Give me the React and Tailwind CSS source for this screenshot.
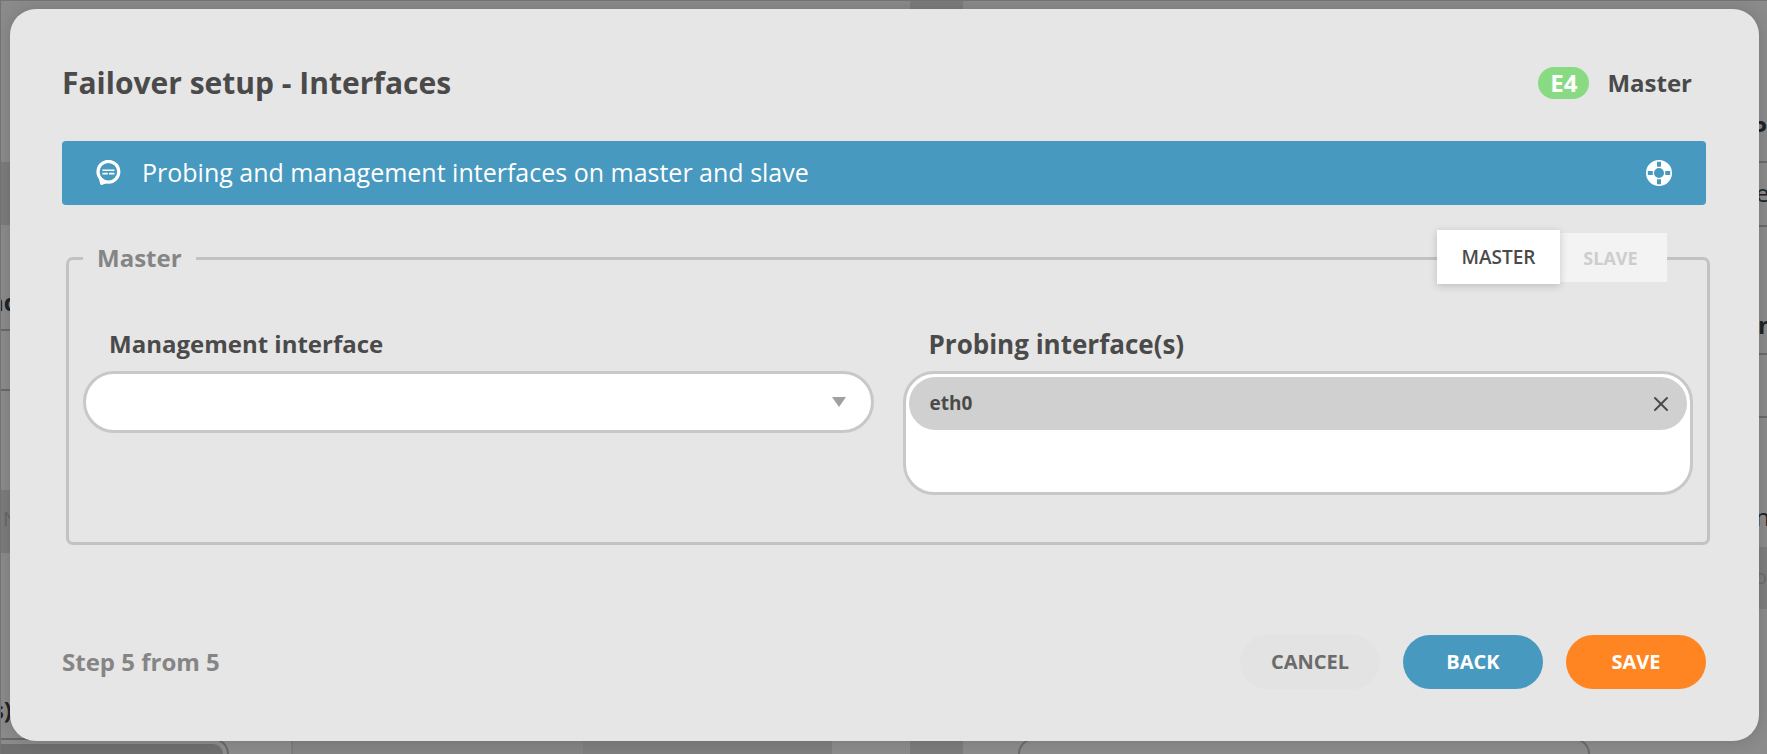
import { X } from "lucide-react";

const ChatIcon = () => (
    <svg viewBox="0 0 26 26" className="h-[26px] w-[26px] shrink-0" fill="none" aria-hidden="true">
        <circle cx="12.4" cy="11.8" r="10.4" stroke="white" strokeWidth="3.2" />
        <path d="M2.8 17.5L4 23.6Q4.4 25.6 6.4 24.8L12.4 22.4L6 18Z" fill="white" />
        <path d="M6.4 10.2h12M6.4 13.6h5.4M13 13.6h5.4" stroke="white" strokeWidth="1.6" />
    </svg>
);

const HelpIcon = () => (
    <svg viewBox="0 0 26 26" className="h-[26px] w-[26px]" aria-hidden="true">
        <circle cx="13" cy="13" r="9" fill="none" stroke="white" strokeWidth="8" />
        <path d="M13 1.8v5M13 19.2v5M1.8 13h5M19.2 13h5" stroke="#4799bf" strokeWidth="4" />
    </svg>
);

const ArrowIcon = () => (
    <svg viewBox="0 0 14 10" className="pointer-events-none absolute top-[26px] right-[28px] h-[10px] w-[14px]" aria-hidden="true">
        <path d="M0 0h14L7 10Z" fill="#a0a0a0" />
    </svg>
);

// the page that lies behind the dialog, only its edges are seen
const Backdrop = () => (
    <div aria-hidden="true" className="absolute inset-0 grid grid-cols-[910fr_53fr_804fr] overflow-hidden border-t border-l border-[#747474] text-[24px] leading-[32px] font-bold text-[#1f2326]">
        <div>
            <div className="w-[18px]">
                <div className="h-[161px]" />
                <div className="h-[63px] bg-[#7c7c7c]" />
                <div className="flex h-[106px] items-end justify-end border-b-2 border-[#6a6a6a] pb-[11px]">nd</div>
                <div className="h-[60px] border-b-2 border-[#6a6a6a]" />
                <div className="h-[99px]" />
                <div className="h-[63px] bg-[#7c7c7c] pt-[13px] pl-[2px] text-[20px] font-normal text-[#686868]">N</div>
            </div>
            <div className="absolute bottom-[28px] flex w-[11px] justify-end">s)</div>
            <div className="absolute bottom-0 flex h-[16px] w-[910px]">
                <div className="w-[228px] rounded-tr-[28px] border-t-2 border-r-2 border-[#686868] pt-1 pr-1">
                    <div className="h-full rounded-tr-[24px] bg-[#6f6f6f]" />
                </div>
                <div className="ml-[62px] w-[292px] border-l-2 border-[#7c7c7c] bg-[#848484]" />
                <div className="w-[249px] bg-[#7e7e7e]" />
            </div>
        </div>
        <div className="bg-[#7c7c7c]" />
        <div className="flex flex-col">
            <div className="w-[9px] self-end">
                <div className="flex h-[162px] items-end justify-end border-b-2 border-[#6a6a6a] pb-[16px]">P</div>
                <div className="flex h-[64px] items-end justify-center border-b-2 border-[#6a6a6a] pb-[16px] font-normal">e</div>
                <div className="flex h-[128px] items-end border-b-2 border-[#6a6a6a] pb-[12px]">n</div>
                <div className="h-[63px] border-b-2 border-[#6a6a6a]" />
                <div className="flex h-[129px] items-end justify-center pb-[14px] font-normal">n</div>
                <div className="flex h-[62px] justify-end bg-[#7e7e7e] pt-[14px] text-[20px] font-normal text-[#6c6c6c]">o</div>
            </div>
            <div className="absolute bottom-0 ml-[55px] h-[16px] w-[572px] rounded-t-[28px] border-2 border-b-0 border-[#6a6a6a]" />
        </div>
    </div>
);

const Field = ({ id, label, labelClass, children }) => (
    <div>
        <label htmlFor={id} className={`mb-[11px] block pl-[26px] leading-[32px] font-bold ${labelClass}`}>{label}</label>
        {children}
    </div>
);

const buttonBase = "h-[54px] w-[140px] rounded-full text-[20px] font-bold";

export default function App() {
    return (
        <div className="relative min-h-screen overflow-hidden bg-[#8b8b8b] pt-[9px] pr-[8px] pb-[13px] pl-[10px] font-['Open_Sans',sans-serif] text-[#4a4a4a]">
            <Backdrop />
            <main role="dialog" aria-labelledby="title" className="relative rounded-[26px] bg-[#e6e6e6] pt-[52px] pr-[53px] pb-[52px] pl-[52px] shadow-[0_0_16px_rgba(0,0,0,0.15)]">
                <header className="flex items-center justify-between pr-[14px]">
                    <h1 id="title" className="text-[30px] leading-[44px] font-bold">Failover setup - Interfaces</h1>
                    <div className="flex items-center gap-[18px] text-[24px] leading-[32px] font-bold">
                        <span className="rounded-full bg-[#89db83] px-[12px] text-white">E4</span>
                        <span>Master</span>
                    </div>
                </header>

                <div className="mt-[36px] flex h-[64px] items-center rounded-[4px] bg-[#4799bf] px-[34px] text-[25px] text-white">
                    <ChatIcon />
                    <p className="ml-[20px] flex-1">Probing and management interfaces on master and slave</p>
                    <button type="button" aria-label="Help"><HelpIcon /></button>
                </div>

                <div className="relative mt-[37px] -mr-[4px] ml-[4px]">
                    <fieldset className="rounded-[7px] border-3 border-[#c2c2c2] px-[14px] pb-[47px]">
                        <legend className="px-[14px] text-[24px] leading-[32px] font-bold text-[#858585]">Master</legend>
                        <div className="grid grid-cols-2 gap-[29px] pt-[54px]">
                            <Field id="management" label="Management interface" labelClass="text-[24px]">
                                <div className="relative">
                                    <select id="management" className="h-[62px] w-full appearance-none rounded-full border-3 border-[#c8c8c8] bg-white px-[24px] text-[20px]">
                                        <option value=""></option>
                                    </select>
                                    <ArrowIcon />
                                </div>
                            </Field>
                            <Field id="probing" label="Probing interface(s)" labelClass="text-[26px]">
                                <div className="h-[124px] rounded-[31px] border-3 border-[#c8c8c8] bg-white p-[3px]">
                                    <div className="flex h-[53px] items-center justify-between rounded-full bg-[#d0d0d0] pr-[14px] pl-[21px] text-[19px] font-bold">
                                        <span>eth0</span>
                                        <button id="probing" type="button" aria-label="Remove eth0">
                                            <X className="h-[24px] w-[24px]" strokeWidth={2} />
                                        </button>
                                    </div>
                                </div>
                            </Field>
                        </div>
                    </fieldset>
                    <div className="absolute -top-[12px] right-[43px] flex items-center">
                        <button type="button" className="relative h-[54px] w-[123px] bg-white text-[19px] font-semibold shadow-[0_2px_8px_rgba(0,0,0,0.18)]">MASTER</button>
                        <button type="button" className="h-[49px] w-[107px] bg-[#f3f3f3] pt-[2px] pr-[6px] text-[18px] font-bold text-[#cdcdcd]">SLAVE</button>
                    </div>
                </div>

                <footer className="mt-[90px] flex items-center justify-between">
                    <p className="text-[24px] leading-[32px] font-bold text-[#858585]">Step 5 from 5</p>
                    <div className="flex gap-[23px]">
                        <button type="button" className={`${buttonBase} bg-[#e3e3e3] text-[#6b6b6b]`}>CANCEL</button>
                        <button type="button" className={`${buttonBase} bg-[#4799bf] text-white`}>BACK</button>
                        <button type="button" className={`${buttonBase} bg-[#ff8522] text-white`}>SAVE</button>
                    </div>
                </footer>
            </main>
        </div>
    );
}
